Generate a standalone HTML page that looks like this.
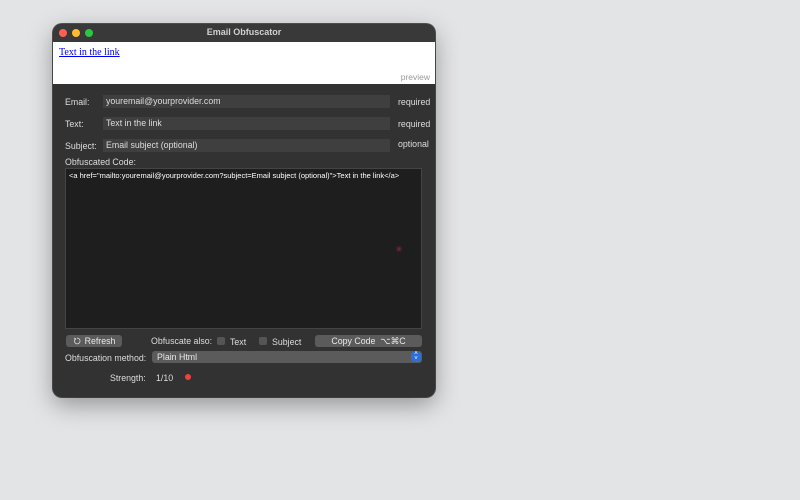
<!DOCTYPE html>
<html><head><style>
body{margin:0;width:800px;height:500px;background:#e3e4e6;font-family:"Liberation Sans",sans-serif;position:relative;overflow:hidden}
.win{position:absolute;left:53px;top:24px;width:382px;height:373px;background:#323232;border-radius:9px;box-shadow:0 8px 24px rgba(0,0,0,.35),0 0 0 1px #555;overflow:hidden}
.tb{height:18px;background:#393939;color:#d0d0d0;font-size:9px;font-weight:bold;text-align:center;line-height:17px;position:relative;border-bottom:1px solid #222}
.dot{position:absolute;top:5px;width:8px;height:8px;border-radius:50%}
.pv{position:absolute;left:0;top:18px;width:382px;height:42px;background:#fff}
.pv a{position:absolute;left:6px;top:5px;font-family:"Liberation Serif",serif;font-size:10px;color:#0000ee;text-decoration:underline}
.pv span{position:absolute;right:5px;bottom:2px;font-size:8.5px;color:#999}
.t{position:absolute;font-size:8.8px;color:#ddd;white-space:nowrap}
.f{position:absolute;left:50px;width:287px;height:13px;background:#3f3f3f;color:#ddd;font-size:8.8px;line-height:13px;padding-left:3px;box-sizing:border-box}
.code{position:absolute;left:12px;top:144px;width:357px;height:161px;background:#1e1e1e;border:1px solid #444;box-sizing:border-box;color:#fff;font-size:7.5px;padding:2px 3px;white-space:nowrap}
.btn{position:absolute;height:12px;background:#5b5b5b;border-radius:3px;color:#e8e8e8;font-size:8.8px;line-height:12px;text-align:center}
.cb{position:absolute;width:8px;height:8px;background:#555;border-radius:2px}
</style></head><body>
<div class="win">
<div class="tb">Email Obfuscator
<div class="dot" style="left:6px;background:#fe5f57"></div>
<div class="dot" style="left:19px;background:#febc2e"></div>
<div class="dot" style="left:32px;background:#28c840"></div></div>
<div class="pv"><a>Text in the link</a><span>preview</span></div>
<div class="t" style="left:12px;top:73px">Email:</div>
<div class="f" style="top:71px">youremail@yourprovider.com</div>
<div class="t" style="left:345px;top:73px">required</div>
<div class="t" style="left:12px;top:95px">Text:</div>
<div class="f" style="top:93px">Text in the link</div>
<div class="t" style="left:345px;top:95px">required</div>
<div class="t" style="left:12px;top:117px">Subject:</div>
<div class="f" style="top:115px">Email subject (optional)</div>
<div class="t" style="left:345px;top:115px">optional</div>
<div class="t" style="left:12px;top:133px">Obfuscated Code:</div>
<div class="code">&lt;a href="mailto:youremail@yourprovider.com?subject=Email subject (optional)"&gt;Text in the link&lt;/a&gt;</div>
<div style="position:absolute;left:344px;top:223px;width:4px;height:4px;border-radius:50%;background:#7a2a3a;filter:blur(1px)"></div>
<div class="btn" style="left:13px;top:311px;width:56px"><svg width="8" height="8" viewBox="0 0 10 10" style="vertical-align:-1px;margin-right:4px"><path d="M3 2.2A3.6 3.6 0 1 0 5 1.4" fill="none" stroke="#ddd" stroke-width="1"/><path d="M1.5 1.2L3.4 2.2L2.4 4" fill="none" stroke="#ddd" stroke-width="1"/></svg>Refresh</div>
<div class="t" style="left:98px;top:312px">Obfuscate also:</div>
<div class="cb" style="left:164px;top:313px"></div>
<div class="t" style="left:177px;top:313px">Text</div>
<div class="cb" style="left:206px;top:313px"></div>
<div class="t" style="left:219px;top:313px">Subject</div>
<div class="btn" style="left:262px;top:311px;width:107px">Copy Code &nbsp;⌥⌘C</div>
<div class="t" style="left:12px;top:329px">Obfuscation method:</div>
<div class="btn" style="left:99px;top:327px;width:270px;text-align:left;padding-left:5px;box-sizing:border-box">Plain Html
<div style="position:absolute;right:1px;top:1px;width:10px;height:10px;background:#2d6fd8;border-radius:3px;color:#fff;font-size:6px;line-height:5px;text-align:center">˄<br>˅</div></div>
<div class="t" style="left:57px;top:349px">Strength:</div>
<div class="t" style="left:103px;top:349px">1/10</div>
<div style="position:absolute;left:132px;top:350px;width:6px;height:6px;border-radius:50%;background:#f04040"></div>
</div>
</body></html>
